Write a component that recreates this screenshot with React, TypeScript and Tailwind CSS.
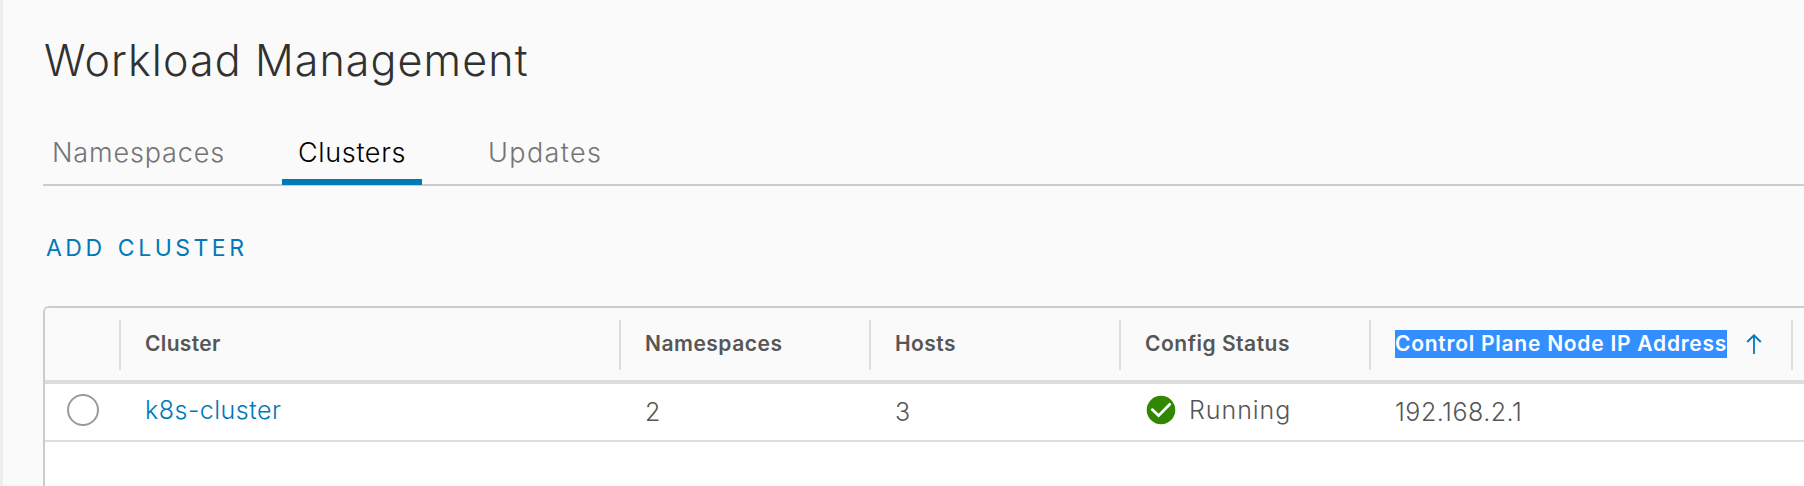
const tabs = [
  { label: "Namespaces", box: "pl-[9px] w-[239px]", text: "tracking-[0.85px] text-[#747474]" },
  { label: "Clusters", box: "pl-4 w-[140px]", text: "tracking-[0.65px] text-black", active: true },
  { label: "Updates", box: "pl-[66px]", text: "tracking-[1.4px] text-[#747474]" },
];

const columns = [
  { label: "Cluster", width: "w-[500px]", tracking: "tracking-[0.34px]" },
  { label: "Namespaces", width: "w-[250px]", tracking: "tracking-[0.5px]" },
  { label: "Hosts", width: "w-[250px]", tracking: "tracking-[0.45px]" },
  { label: "Config Status", width: "w-[250px]", tracking: "tracking-[0.51px]" },
];

function CheckCircle() {
  return (
    <svg className="size-[30px] shrink-0" viewBox="0 0 30 30">
      <circle cx="15" cy="15" r="14.3" fill="#318700" />
      <path d="M6.2 14.6 L12.6 20.6 L23.8 9.2" fill="none" stroke="#fff" strokeWidth="2.7" strokeLinecap="round" strokeLinejoin="miter" />
    </svg>
  );
}

function ArrowUp() {
  return (
    <svg className="ml-[19px] h-5 w-4 shrink-0" viewBox="0 0 16 20">
      <path d="M8 20 V1.4 M1.2 8 L8 1.3 L14.8 8" fill="none" stroke="#0079b8" strokeWidth="1.8" />
    </svg>
  );
}

export default function App() {
  return (
    <div className="flex h-[486px] w-[1804px] overflow-hidden bg-[#fafafa] font-['Inter',sans-serif] text-[#565656]">
      <div className="w-[3px] shrink-0 bg-[#eee]" />
      <main className="flex min-w-0 flex-1 flex-col pt-8 pl-10">
        <h1 className="pl-px text-[43px] leading-[56px] font-light tracking-[1.1px] whitespace-nowrap text-[#313131]">
          Workload Management
        </h1>

        <nav className="mt-[46px] flex h-[52px] border-b-2 border-[#ccc] text-[27px] leading-[38px] font-light">
          {tabs.map((t) => (
            <div key={t.label} className={`flex flex-col justify-between ${t.box}`}>
              <span className={t.text}>{t.label}</span>
              {t.active && <span className="-mb-px -ml-4 h-1.5 bg-[#0079b8]" />}
            </div>
          ))}
        </nav>

        <button className="mt-[46px] self-start pl-[3px] text-[23px] leading-8 font-normal tracking-[3.5px] [word-spacing:2.3px] text-[#0079b8]">
          ADD CLUSTER
        </button>

        <section className="mt-[42px] flex flex-1 flex-col rounded-tl-md border-t-2 border-l-2 border-[#ccc] bg-white">
          <div className="flex h-[76px] shrink-0 rounded-tl border-b-4 border-[#ddd] bg-[#fafafa] pt-3 text-[21px] leading-7 font-semibold whitespace-nowrap">
            <div className="w-[74px] shrink-0" />
            {columns.map((c) => (
              <div key={c.label} className={`flex h-[50px] shrink-0 items-center border-l-2 border-[#ddd] pb-[3px] pl-6 ${c.width}`}>
                <span className={c.tracking}>{c.label}</span>
              </div>
            ))}
            <div className="flex h-[50px] w-[422px] shrink-0 items-center border-l-2 border-[#ddd] pb-[3px] pl-6">
              <span className="bg-[#338fff] tracking-[0.75px] text-white">Control Plane Node IP Address</span>
              <ArrowUp />
            </div>
            <div className="h-[50px] shrink-0 border-l-2 border-[#ddd]" />
          </div>

          <div className="flex h-[58px] shrink-0 items-center border-b-2 border-[#ddd] text-[25px] leading-8 font-light">
            <div className="w-[74px] shrink-0 pb-1 pl-[22px]">
              <div className="size-8 rounded-full border-2 border-[#9a9a9a]" />
            </div>
            <div className="w-[500px] shrink-0 pb-1 pl-[26px] tracking-[0.5px] text-[#0079b8]">k8s-cluster</div>
            <div className="w-[250px] shrink-0 pl-[26px]">2</div>
            <div className="w-[250px] shrink-0 pl-[26px]">3</div>
            <div className="flex w-[250px] shrink-0 items-center gap-[13px] pb-1 pl-[27px] tracking-[0.95px]">
              <CheckCircle />
              Running
            </div>
            <div className="pl-[26px] tracking-[0.5px]">192.168.2.1</div>
          </div>
        </section>
      </main>
    </div>
  );
}
